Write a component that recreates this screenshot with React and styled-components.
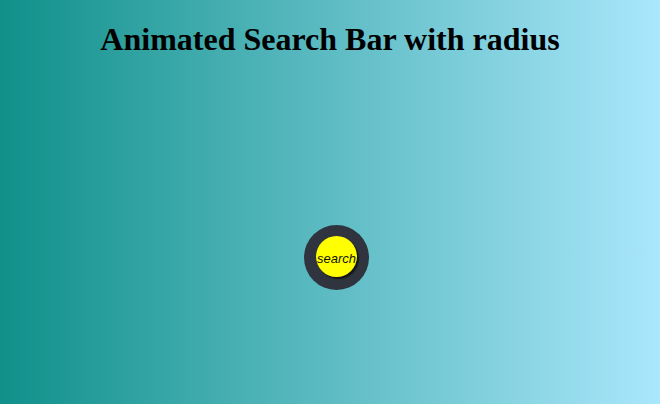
import React from "react";
import styled, { createGlobalStyle } from "styled-components";

const GlobalStyle = createGlobalStyle`
  html, body {
    margin: 0;
    padding: 0;
  }
  body {
    background: linear-gradient(to right, #10908a, #aae7fc);
    min-height: 404px;
  }
`;

const Page = styled.div`
  display: flex;
  flex-direction: column;
  align-items: center;
  height: 404px;
`;

const Title = styled.h1`
  margin: 21px 0 0;
  font-family: "Liberation Serif", "Times New Roman", serif;
  font-size: 32px;
  font-weight: bold;
  line-height: 37px;
  color: #000;
`;

const Stage = styled.div`
  padding-top: 167px;
  margin-left: 13px;
`;

const SearchBox = styled.div`
  display: flex;
  align-items: center;
  justify-content: center;
  box-sizing: border-box;
  width: 65px;
  height: 65px;
  padding: 11px 12px 13px 12px;
  border-radius: 50%;
  background: #2f343e;
`;

const SearchInput = styled.input.attrs({
  type: "text",
  placeholder: "search"
})`
  box-sizing: border-box;
  width: 41px;
  height: 41px;
  padding: 3px 0 0;
  border: none;
  outline: none;
  border-radius: 50%;
  background: #ffff00;
  box-shadow: 2px 2px 1px #15171b;
  text-align: center;
  font-family: "Liberation Sans", Arial, sans-serif;
  font-style: italic;
  font-size: 13px;
  color: #000;
  &::placeholder {
    color: #111;
    opacity: 1;
  }
`;

const App = () => {
  return (
    <Page>
      <GlobalStyle />
      <Title>Animated Search Bar with radius</Title>
      <Stage>
        <SearchBox>
          <SearchInput />
        </SearchBox>
      </Stage>
    </Page>
  );
};

export default App;
